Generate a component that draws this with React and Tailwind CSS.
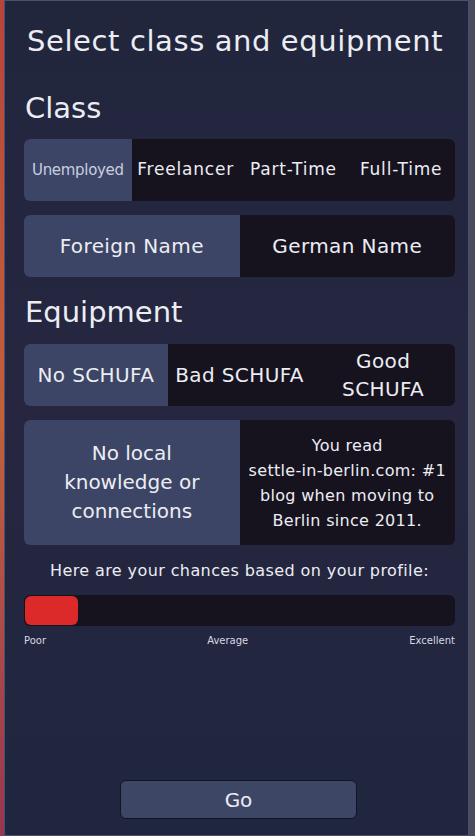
import React from "react";

const classes = ["Unemployed", "Freelancer", "Part-Time", "Full-Time"];

function App() {
    return (
        <div
            className="w-[475px] h-[836px] flex bg-[#3a3346] text-[#ecedf3]"
            style={{ fontFamily: '"DejaVu Sans", "Liberation Sans", sans-serif' }}
        >
            <div className="w-[4px] h-full bg-gradient-to-b from-[#b8443a] via-[#c2603a] to-[#9a3550]" />
            <div className="w-[465px] h-full border border-[#4a5070] bg-gradient-to-b from-[#21263d] via-[#262640] to-[#20263f] pl-[19px] pr-[13px] flex flex-col">
                <h1 className="mt-[22px] ml-[3px] text-[29px] leading-[36px] tracking-[0.6px] whitespace-nowrap">
                    Select class and equipment
                </h1>
                <h2 className="mt-[31px] ml-[1px] text-[29px] leading-[36px]">Class</h2>

                <div className="mt-[13px] h-[62px] flex rounded-md overflow-hidden bg-[#16131f]">
                    {classes.map((c, i) => (
                        <div
                            key={c}
                            className={
                                i === 0
                                    ? "flex-1 flex items-center justify-center bg-[#3c4565] text-[#c9cde0] text-[15px] tracking-[-0.3px]"
                                    : "flex-1 flex items-center justify-center text-[17px] tracking-[0.8px] whitespace-nowrap"
                            }
                        >
                            {c}
                        </div>
                    ))}
                </div>

                <div className="mt-[14px] h-[62px] grid grid-cols-2 rounded-md overflow-hidden bg-[#16131f] text-[20px] tracking-[0.4px]">
                    <div className="flex items-center justify-center bg-[#3c4565]">Foreign Name</div>
                    <div className="flex items-center justify-center">German Name</div>
                </div>

                <h2 className="mt-[17px] ml-[1px] text-[29px] leading-[36px]">Equipment</h2>

                <div className="mt-[14px] h-[62px] grid grid-cols-3 rounded-md overflow-hidden bg-[#16131f] text-[20px] leading-[28px] text-center tracking-[0.4px]">
                    <div className="flex items-center justify-center bg-[#3c4565] whitespace-nowrap">No SCHUFA</div>
                    <div className="flex items-center justify-center whitespace-nowrap">Bad SCHUFA</div>
                    <div className="flex items-center justify-center">Good<br />SCHUFA</div>
                </div>

                <div className="mt-[14px] h-[125px] grid grid-cols-2 rounded-md overflow-hidden bg-[#16131f] text-center">
                    <div className="flex items-center justify-center bg-[#3c4565] text-[20px] leading-[29px] px-4">
                        No local knowledge or connections
                    </div>
                    <div className="flex items-center justify-center text-[16px] leading-[25px] tracking-[0.3px] whitespace-nowrap">
                        <p>
                            You read<br />
                            settle-in-berlin.com: #1<br />
                            blog when moving to<br />
                            Berlin since 2011.
                        </p>
                    </div>
                </div>

                <p className="mt-[16px] text-center text-[16px] leading-[20px] tracking-[0.4px] whitespace-nowrap">
                    Here are your chances based on your profile:
                </p>

                <div className="mt-[14px] h-[31px] rounded-md bg-[#16131f] p-px">
                    <div className="h-full w-[53px] rounded-md bg-[#dc2a2a]" />
                </div>
                <div className="mt-[8px] flex justify-between text-[10px] leading-[14px] text-[#d6d8e2]">
                    <span>Poor</span>
                    <span>Average</span>
                    <span>Excellent</span>
                </div>

                <div className="flex-1" />
                <div className="mb-[16px] flex justify-center">
                    <button className="ml-[-2px] w-[237px] h-[39px] rounded-md border border-[#12141f] bg-[#3e4666] text-[20px]">
                        Go
                    </button>
                </div>
            </div>
            <div className="w-[6px] h-full bg-[#4a4b5e]" />
        </div>
    );
}

export default App;
